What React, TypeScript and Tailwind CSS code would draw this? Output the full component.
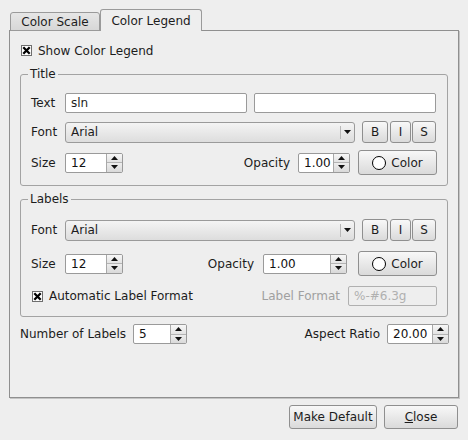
import React from "react";
import clsx from "clsx";

function CheckX() {
  return (
    <svg width="11" height="11" viewBox="0 0 11 11" className="shrink-0">
      <rect x="0.5" y="0.5" width="10" height="10" fill="#fff" stroke="#6e6e6e" />
      <path d="M2.3 2.3 L8.7 8.7 M8.7 2.3 L2.3 8.7" stroke="#000" strokeWidth="2.3" />
    </svg>
  );
}

function Tri({ up }: { up?: boolean }) {
  return (
    <svg width="7" height="4" viewBox="0 0 7 4">
      <path d={up ? "M0 4 L3.5 0 L7 4 Z" : "M0 0 L7 0 L3.5 4 Z"} fill="#111" />
    </svg>
  );
}

function Spin({ w, value }: { w: string; value: string }) {
  return (
    <div className={clsx("flex h-[20px] shrink-0 overflow-hidden rounded-[2px] border border-[#9a9a9a] bg-white", w)}>
      <div className="flex flex-1 items-center pl-[5px] text-[#111]">{value}</div>
      <div className="flex w-[16px] flex-col border-l border-[#a8a8a8]">
        <div className="flex flex-1 items-center justify-center border-b border-[#b4b4b4] bg-linear-to-b from-[#f7f7f7] to-[#e3e3e3]">
          <Tri up />
        </div>
        <div className="flex flex-1 items-center justify-center bg-linear-to-b from-[#ededed] to-[#d9d9d9]">
          <Tri />
        </div>
      </div>
    </div>
  );
}

function Btn({ className, children }: { className?: string; children: React.ReactNode }) {
  return (
    <div
      className={clsx(
        "flex shrink-0 items-center justify-center rounded-[3px] border border-[#8f8f8f] bg-linear-to-b from-[#f8f8f8] to-[#dadada]",
        className
      )}
    >
      {children}
    </div>
  );
}

function Combo() {
  return (
    <div className="flex h-[21px] w-[290px] shrink-0 rounded-[3px] border border-[#9a9a9a] bg-linear-to-b from-[#f4f4f4] to-[#dddddd]">
      <div className="flex flex-1 items-center pl-[5px]">Arial</div>
      <div className="my-[3px] flex w-[14px] items-center justify-center border-l border-[#b8b8b8]">
        <Tri />
      </div>
    </div>
  );
}

function FontRow() {
  return (
    <div className="flex h-[22px] items-center">
      <div className="w-[34px] shrink-0">Font</div>
      <Combo />
      <Btn className="ml-[7px] h-[22px] w-[26px]">B</Btn>
      <Btn className="ml-[2px] h-[22px] w-[21px]">I</Btn>
      <Btn className="ml-[1px] h-[22px] w-[24px]">S</Btn>
    </div>
  );
}

function ColorBtn() {
  return (
    <Btn className="h-[25px] w-[79px] gap-[5px]">
      <span className="h-[14px] w-[14px] rounded-full border-[1.5px] border-black bg-white" />
      <span>Color</span>
    </Btn>
  );
}

export default function App() {
  return (
    <div className="h-[440px] w-[468px] overflow-hidden bg-[#eeeeee] font-['DejaVu_Sans',sans-serif] text-[12px] leading-[14px] text-[#1c1c1c]">
      {/* Tabs */}
      <div className="flex h-[31px] items-end pl-[10px] pt-[9px]">
        <div className="flex h-[19px] w-[90px] items-center justify-center rounded-t-[3px] border border-[#9a9a9a] bg-linear-to-b from-[#e6e6e6] to-[#d7d7d7]">
          Color Scale
        </div>
        <div className="relative z-10 flex h-[22px] w-[102px] items-center justify-center rounded-t-[3px] border border-b-0 border-[#9a9a9a] bg-[#eeeeee]">
          Color Legend
        </div>
      </div>

      {/* Panel */}
      <div className="ml-[9px] mt-[-1px] h-[368px] w-[450px] border border-[#8f8f8f] px-[10px] pt-[12px] shadow-[1px_1px_0_#c4c4c4]">
        <div className="flex h-[15px] items-center gap-[6px] pl-[1px]">
          <CheckX />
          <span>Show Color Legend</span>
        </div>

        <fieldset className="m-0 mt-[9px] min-w-0 rounded-[3px] border border-[#a3a3a3] px-[10px] pb-[10px] pt-[12px]">
          <legend className="ml-[-3px] px-[2px] leading-[14px]">Title</legend>
          <div className="flex h-[20px] items-center">
            <div className="w-[34px] shrink-0">Text</div>
            <div className="flex h-[20px] w-[182px] items-center rounded-[2px] border border-[#9a9a9a] bg-white pl-[5px]">
              sln
            </div>
            <div className="ml-[7px] h-[20px] w-[182px] rounded-[2px] border border-[#9a9a9a] bg-white" />
          </div>
          <div className="mt-[8px]">
            <FontRow />
          </div>
          <div className="mt-[7px] flex h-[25px] items-center">
            <div className="w-[34px] shrink-0">Size</div>
            <Spin w="w-[58px]" value="12" />
            <div className="flex-1" />
            <span>Opacity</span>
            <div className="ml-[8px]">
              <Spin w="w-[52px]" value="1.00" />
            </div>
            <div className="ml-[8px]">
              <ColorBtn />
            </div>
          </div>
        </fieldset>

        <fieldset className="m-0 mt-[6px] min-w-0 rounded-[3px] border border-[#a3a3a3] px-[10px] pb-[10px] pt-[13px]">
          <legend className="ml-[-3px] px-[2px] leading-[14px]">Labels</legend>
          <FontRow />
          <div className="mt-[10px] flex h-[25px] items-center">
            <div className="w-[34px] shrink-0">Size</div>
            <Spin w="w-[58px]" value="12" />
            <div className="flex-1" />
            <span>Opacity</span>
            <div className="ml-[9px]">
              <Spin w="w-[84px]" value="1.00" />
            </div>
            <div className="ml-[11px]">
              <ColorBtn />
            </div>
          </div>
          <div className="mt-[10px] flex h-[20px] items-center">
            <div className="flex items-center gap-[6px] pl-[1px]">
              <CheckX />
              <span>Automatic Label Format</span>
            </div>
            <div className="flex-1" />
            <span className="text-[#a0a0a0]">Label Format</span>
            <div className="ml-[8px] flex h-[20px] w-[89px] items-center rounded-[2px] border border-[#b0b0b0] bg-[#eeeeee] pl-[5px] text-[#b0b0b0]">
              %-#6.3g
            </div>
          </div>
        </fieldset>

        <div className="mr-[-1px] mt-[7px] flex h-[20px] items-center">
          <span>Number of Labels</span>
          <div className="ml-[7px]">
            <Spin w="w-[54px]" value="5" />
          </div>
          <div className="flex-1" />
          <span>Aspect Ratio</span>
          <div className="ml-[7px]">
            <Spin w="w-[62px]" value="20.00" />
          </div>
        </div>
      </div>

      {/* Dialog buttons */}
      <div className="mt-[7px] flex justify-end gap-[7px] pr-[10px]">
        <Btn className="h-[24px] w-[88px]">Make Default</Btn>
        <Btn className="h-[24px] w-[74px] border-[#5e5e5e]">
          <span>
            <span className="underline">C</span>lose
          </span>
        </Btn>
      </div>
    </div>
  );
}
